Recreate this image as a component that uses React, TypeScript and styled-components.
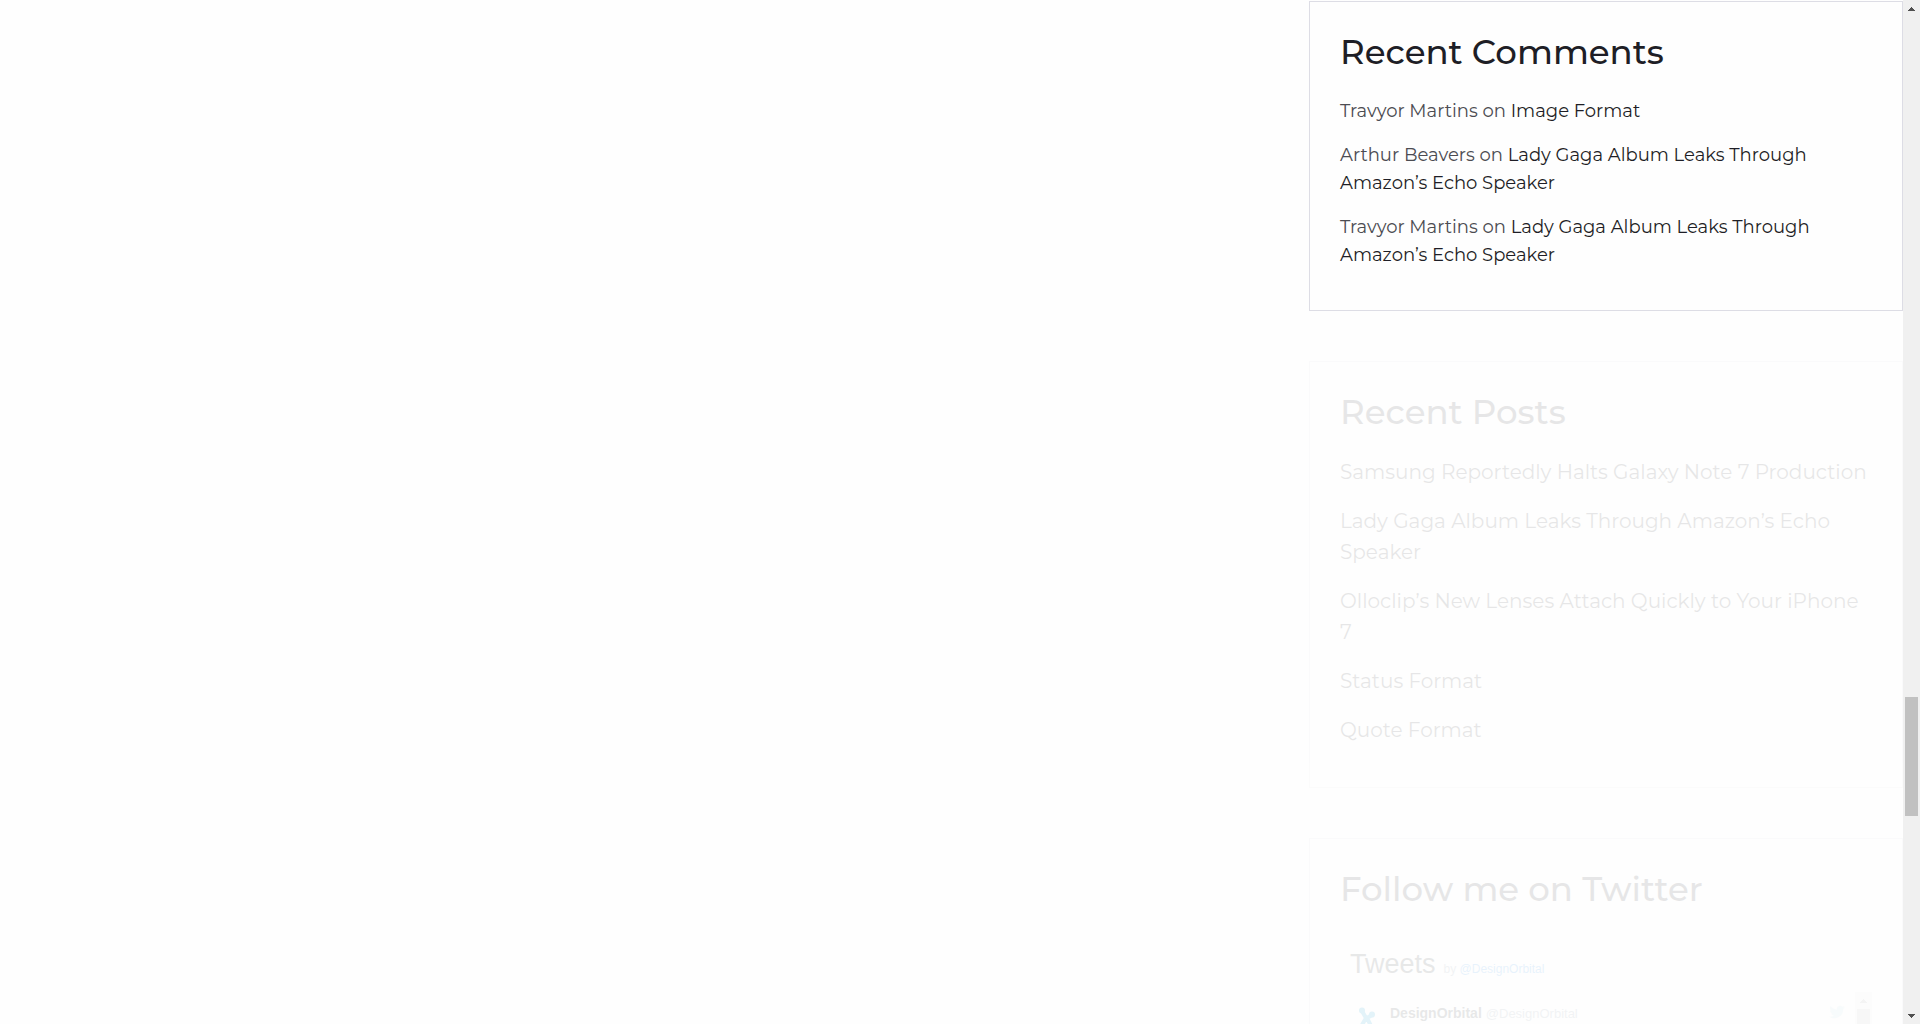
import React from 'react';
import styled, { createGlobalStyle } from 'styled-components';

const GlobalStyle = createGlobalStyle`
  *, *::before, *::after { box-sizing: border-box; }
  html, body { margin: 0; padding: 0; }
  body {
    background: #fefefe;
    color: #1e1e26;
    font-family: Montserrat, Inter, 'Open Sans', sans-serif;
    overflow: hidden;
  }
  a { color: inherit; text-decoration: none; }
`;

const Page = styled.div`
  display: flex;
  height: 100vh;
  overflow: hidden;
`;

const Main = styled.main`
  flex: 1;
`;

const Sidebar = styled.aside`
  display: flex;
  flex-direction: column;
  gap: 50px;
  width: 594px;
  max-width: 100%;
  padding-top: 1px;
`;

const Widget = styled.section<{ $faded?: boolean }>`
  flex: none;
  padding: 30px 30px 41px;
  border: 1px solid #dddde5;
  opacity: ${(p) => (p.$faded ? 0.1 : 1)};
`;

const WidgetTitle = styled.h2`
  margin: 0 0 24px;
  font-size: 34px;
  line-height: 41px;
  font-weight: 500;
`;

const List = styled.ul<{ $gap: number }>`
  display: flex;
  flex-direction: column;
  gap: ${(p) => p.$gap}px;
  margin: 0;
  padding: 0;
  list-style: none;
`;

const Comment = styled.li`
  font-size: 18px;
  line-height: 28px;
  color: #4c4c52;

  a { color: #1e1e26; }
`;

const Post = styled.li`
  font-size: 20px;
  line-height: 31px;
`;

const Timeline = styled.div`
  display: flex;
  flex-direction: column;
  font-family: 'Liberation Sans', Arial, sans-serif;
`;

const TimelineHeader = styled.header`
  display: flex;
  align-items: baseline;
  gap: 8px;
  padding: 12px 10px 10px;
  color: #292f33;
`;

const TimelineTitle = styled.h3`
  margin: 0;
  font-size: 27px;
  line-height: 36px;
  font-weight: 400;
`;

const Byline = styled.span`
  font-size: 12px;
  color: #8899a6;

  a { color: #2b94ee; }
`;

const Viewport = styled.div`
  display: flex;
  height: 320px;
`;

const Tweet = styled.article`
  display: flex;
  flex: 1;
  align-items: flex-start;
  gap: 4px;
  padding: 12px 10px;
`;

const Avatar = styled.svg`
  width: 36px;
  height: 36px;
`;

const Author = styled.a`
  display: flex;
  flex: 1;
  align-items: baseline;
  gap: 4px;
  line-height: 18px;
  font-size: 13px;
  color: #8899a6;

  strong {
    font-size: 14px;
    color: #292f33;
  }
`;

const Bird = styled.svg`
  width: 16px;
  height: 16px;
  fill: #c4e4ec;
`;

const Bar = styled.div<{ $light?: boolean }>`
  display: flex;
  flex: none;
  flex-direction: column;
  width: 17px;
  color: ${(p) => (p.$light ? '#a0a0a0' : '#505050')};
  background: #f0f0f0;
`;

const ArrowButton = styled.button`
  display: flex;
  align-items: center;
  justify-content: center;
  width: 17px;
  height: 17px;
  padding: 0;
  border: 0;
  background: none;
  color: inherit;
`;

const Track = styled.div<{ $rows: string }>`
  display: grid;
  flex: 1;
  grid-template-rows: ${(p) => p.$rows};
  padding: 0 2px;
`;

const Thumb = styled.div`
  grid-row: 2;
  background: #c1c1c1;
`;

const Arrow = ({ up }: { up?: boolean }) => (
  <svg width="7" height="4" viewBox="0 0 7 4" fill="currentColor" shapeRendering="crispEdges" aria-hidden="true">
    <path d={up ? 'M3 0h1v1h1v1h1v1h1v1H0V3h1V2h1V1h1z' : 'M0 0h7v1H6v1H5v1H4v1H3V3H2V2H1V1H0z'} />
  </svg>
);

const ScrollBar = ({ rows, light }: { rows: string; light?: boolean }) => (
  <Bar $light={light}>
    <ArrowButton type="button" aria-label="Scroll up"><Arrow up /></ArrowButton>
    <Track $rows={rows}><Thumb /></Track>
    <ArrowButton type="button" aria-label="Scroll down"><Arrow /></ArrowButton>
  </Bar>
);

const comments = [
  { author: 'Travyor Martins', post: 'Image Format' },
  { author: 'Arthur Beavers', post: 'Lady Gaga Album Leaks Through Amazon’s Echo Speaker' },
  { author: 'Travyor Martins', post: 'Lady Gaga Album Leaks Through Amazon’s Echo Speaker' },
];

const posts = [
  'Samsung Reportedly Halts Galaxy Note 7 Production',
  'Lady Gaga Album Leaks Through Amazon’s Echo Speaker',
  'Olloclip’s New Lenses Attach Quickly to Your iPhone 7',
  'Status Format',
  'Quote Format',
];

export default function App() {
  return (
    <>
      <GlobalStyle />
      <Page>
        <Main />
        <Sidebar>
          <Widget>
            <WidgetTitle>Recent Comments</WidgetTitle>
            <List $gap={16}>
              {comments.map((c, i) => (
                <Comment key={i}>
                  {c.author} on <a href="#post">{c.post}</a>
                </Comment>
              ))}
            </List>
          </Widget>
          <Widget $faded>
            <WidgetTitle>Recent Posts</WidgetTitle>
            <List $gap={18}>
              {posts.map((p) => (
                <Post key={p}><a href="#post">{p}</a></Post>
              ))}
            </List>
          </Widget>
          <Widget $faded>
            <WidgetTitle>Follow me on Twitter</WidgetTitle>
            <Timeline>
              <TimelineHeader>
                <TimelineTitle>Tweets</TimelineTitle>
                <Byline>by <a href="#profile">@DesignOrbital</a></Byline>
              </TimelineHeader>
              <Viewport>
                <Tweet>
                  <Avatar viewBox="0 0 36 36" aria-hidden="true">
                    <g stroke="#0098d0" strokeLinecap="round" fill="none">
                      <path d="M12 7L16 14L12 21M22 11L17 14L20 20" strokeWidth="4" strokeLinejoin="round" />
                      <path d="M12 6.500v.1M22 10.500v.1" strokeWidth="6" />
                    </g>
                  </Avatar>
                  <Author href="#profile">
                    <strong>DesignOrbital</strong>
                    <span>@DesignOrbital</span>
                  </Author>
                  <Bird viewBox="0 0 24 24" aria-hidden="true">
                    <path d="M23.6 4.9c-.8.4-1.7.6-2.7.8 1-.6 1.7-1.5 2-2.6-.9.5-1.9.9-3 1.1A4.7 4.7 0 0 0 11.900 8.500C8 8.300 4.500 6.400 2.200 3.500c-1.300 2.200-.7 4.900 1.400 6.300-.8 0-1.500-.2-2.100-.6 0 2.300 1.600 4.200 3.800 4.700-.7.2-1.400.2-2.100.1.600 1.900 2.300 3.200 4.400 3.300A9.500 9.500 0 0 1 .6 19.200 13.400 13.400 0 0 0 21.200 7.300c.9-.6 1.700-1.400 2.400-2.400z" />
                  </Bird>
                </Tweet>
                <ScrollBar light rows="0 60fr 225fr" />
              </Viewport>
            </Timeline>
          </Widget>
        </Sidebar>
        <ScrollBar rows="680fr 119fr 191fr" />
      </Page>
    </>
  );
}
